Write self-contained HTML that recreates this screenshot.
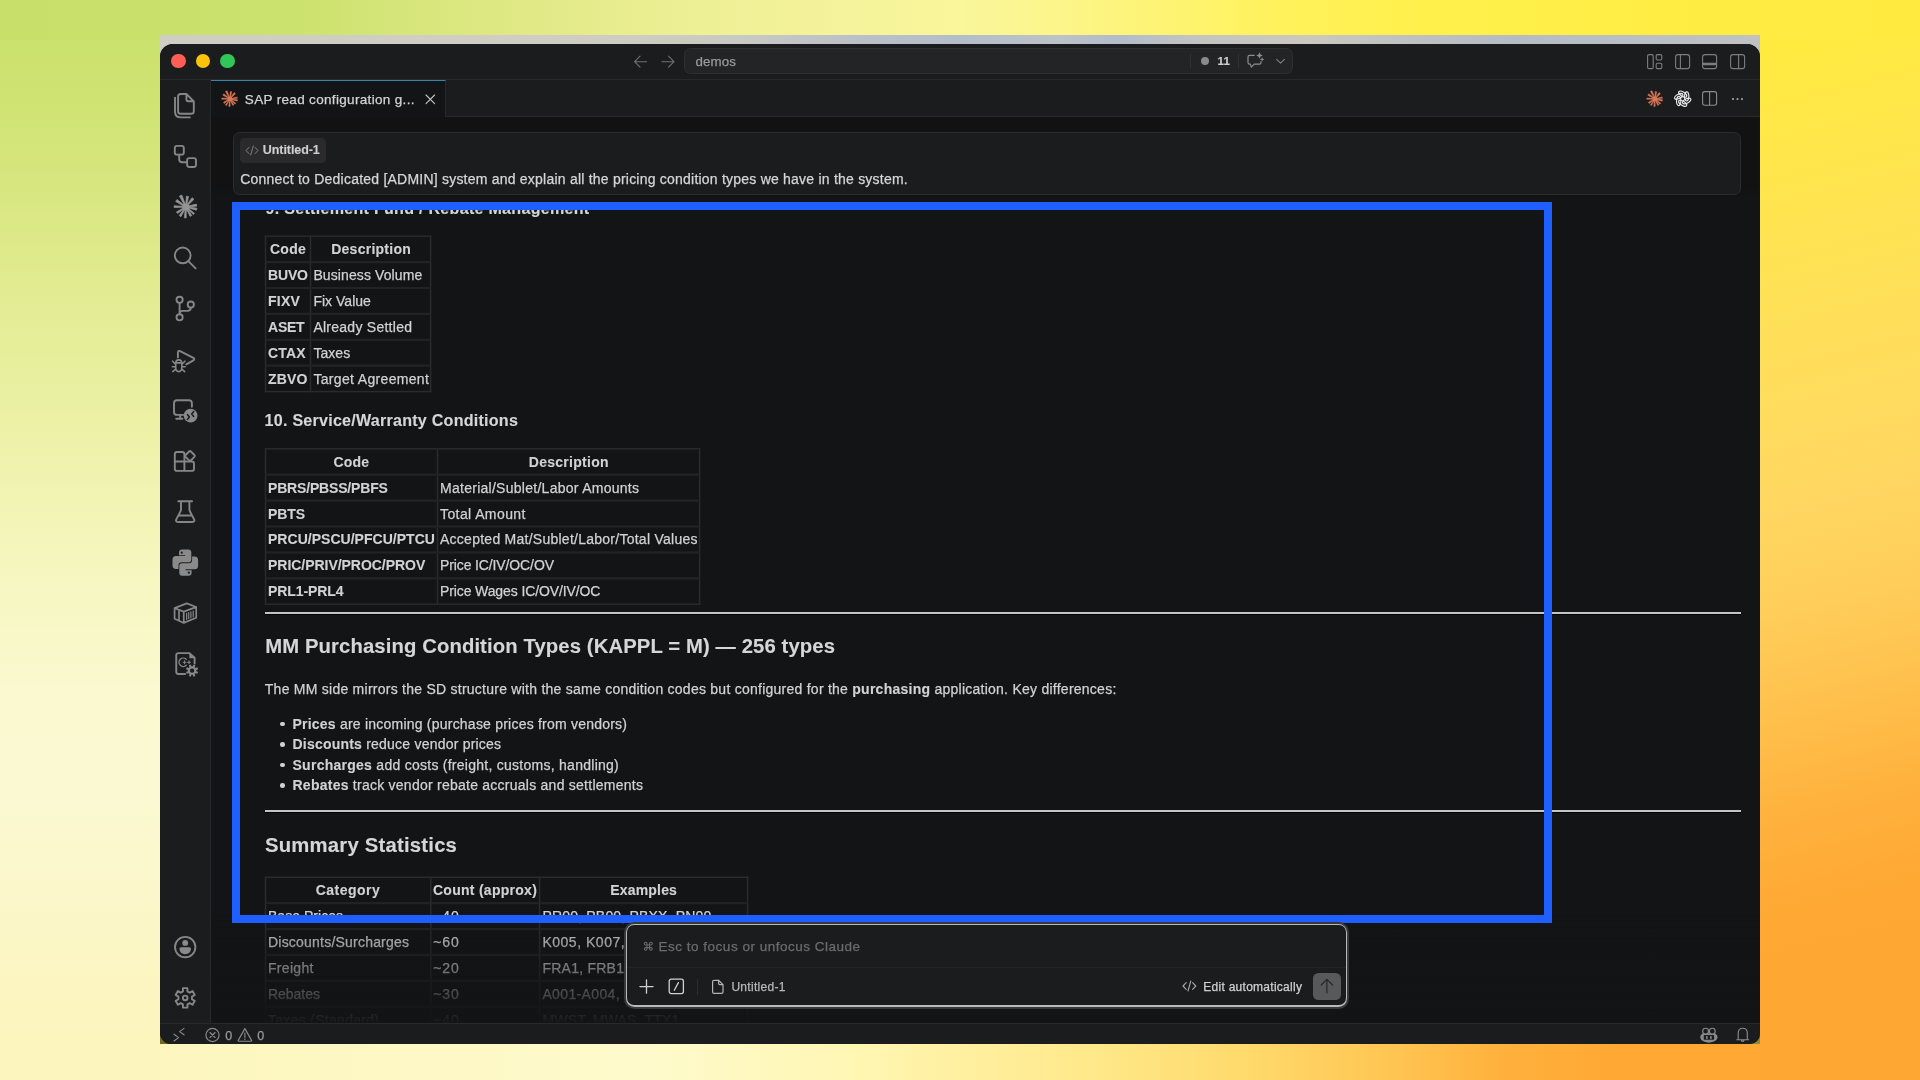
<!DOCTYPE html>
<html lang="en">
<head>
<meta charset="utf-8">
<title>VS Code - Claude</title>
<style>
*{box-sizing:border-box}
html,body{margin:0;padding:0}
body{width:1920px;height:1080px;overflow:hidden;position:relative;font-family:"Liberation Sans",sans-serif;background:#ffe98a}
.abs{position:absolute}
.t{position:absolute;white-space:pre;line-height:1;color:#d2d2d2;-webkit-text-stroke:.25px}
.b,.t b{font-weight:700;-webkit-text-stroke:.12px}
/* background mesh */
#bgB{left:0;top:0;width:1920px;height:1080px;background:linear-gradient(to right,#fcf5bd 0px,#fdf7c2 300px,#fefacb 650px,#fff7b4 850px,#fff0a0 960px,#ffe888 1100px,#ffd96b 1250px,#ffc451 1400px,#ffb13d 1500px,#ffa834 1620px,#ffa733 1920px)}
#bgT{left:0;top:0;width:1920px;height:40px;background:linear-gradient(to right,#c8e06a 0px,#c9e06b 160px,#cce26e 300px,#d8e67c 420px,#e3ea89 560px,#eef096 700px,#f5f39b 850px,#f9f69b 960px,#fcf58a 1060px,#fef370 1180px,#fff25a 1290px,#fff04c 1420px,#ffed44 1660px,#ffea40 1920px)}
#bgL{left:0;top:0;width:161px;height:1080px;background:linear-gradient(to bottom,#c8e06a 0px,#cfe372 100px,#d9e782 200px,#e3ec93 300px,#eaf0a2 400px,#f2f4b4 500px,#f7f7c4 600px,#faf9d0 700px,#fbf9d2 790px,#fbf7ca 900px,#fcf5c0 1000px,#fcf5bd 1080px)}
#bgR{left:1759px;top:0;width:161px;height:1080px;background:linear-gradient(166deg,#ffeb3d 19px,#ffe847 116px,#ffe450 213px,#ffe058 310px,#ffdc5e 407px,#ffd661 504px,#ffcd5a 601px,#ffc04c 698px,#ffb23e 795px,#ffaa36 872px,#ffa733 930px,#ffa733 1090px)}
/* behind-window strip */
#strip{left:160px;top:35px;width:1600.4px;height:30px;background:linear-gradient(to right,#cfcdc4 0px,#d0cec4 350px,#cccbc2 540px,#c6c8c6 600px,#b9c0c8 700px,#b4bdca 800px,#bcc2c8 900px,#b3bccb 960px,#c4c5c2 1040px,#cbc8bf 1150px,#bfc2c2 1240px,#b6bcc6 1350px,#bbc0c6 1500px,#c0c2c2 1600px)}
.olive{width:14px;height:14px;background:#6c6a1e}
/* window */
#win{left:160px;top:44px;width:1600.4px;height:1000.4px;overflow:hidden;border-radius:13px 13px 10.5px 11.5px;background:#131416}
#wini{left:-160px;top:-44px;width:1920px;height:1080px;will-change:transform}
.chrome{background:#1b1c1e}
.line{background:#28292b}
svg{position:absolute;overflow:visible}
.ic{fill:none;stroke:#8b8b8b;stroke-width:1.15;stroke-linecap:round;stroke-linejoin:round}
/* content */
.bd{}
.h2{font-weight:700;color:#d6d6d6;-webkit-text-stroke:.12px}
.h3{font-weight:700;color:#d6d6d6;-webkit-text-stroke:.12px}
.vl{position:absolute;width:1px;background:#2b2c2f}
.rw{fill:#222326}
.hr{position:absolute;left:264.7px;width:1476px;height:2px;background:#c4c4c4;box-shadow:0 1px 0 #000}
</style>
</head>
<body>
<div class="abs" id="bgB"></div>
<div class="abs" id="bgL"></div>
<div class="abs" id="bgR"></div>
<div class="abs" id="bgT"></div>
<div class="abs" id="strip"></div>
<div class="abs olive" style="left:160px;top:1031px;height:13px"></div>
<div class="abs olive" style="left:1748px;top:1033px;width:12px;height:11px;background:#8a8c3c"></div>
<div class="abs" id="win"><div class="abs" id="wini">
<!-- title bar -->
<div class="abs chrome" style="left:160px;top:44px;width:1601px;height:36px"></div>
<div class="abs line" style="left:160px;top:79.4px;width:1601px;height:1px"></div>
<!-- traffic lights -->
<div class="abs" style="left:171.4px;top:53.9px;width:14.6px;height:14.6px;border-radius:50%;background:#ff5e57"></div>
<div class="abs" style="left:195.8px;top:53.9px;width:14.6px;height:14.6px;border-radius:50%;background:#fdc30b"></div>
<div class="abs" style="left:220.2px;top:53.9px;width:14.6px;height:14.6px;border-radius:50%;background:#30c758"></div>
<!-- nav arrows -->
<svg style="left:633px;top:54px" width="16" height="16" viewBox="0 0 16 16"><path class="ic" style="stroke:#6f6f6f" d="M13.6 7.7H1.8M7 2.2L1.6 7.7L7 13.2"/></svg>
<svg style="left:660px;top:54px" width="16" height="16" viewBox="0 0 16 16"><path class="ic" style="stroke:#6f6f6f" d="M2 7.7H13.8M8.6 2.2L14 7.7L8.6 13.2"/></svg>
<!-- command center -->
<div class="abs" style="left:684px;top:48.4px;width:609px;height:25.4px;border-radius:6.5px;background:#232426;border:1px solid #2e2f31"></div>
<div class="t" style="left:695.6px;top:54.6px;font-size:13.3px;letter-spacing:.1px;color:#9a9a9a">demos</div>
<div class="abs" style="left:1190.3px;top:54px;width:1px;height:14px;background:#303133"></div>
<div class="abs" style="left:1238.1px;top:54px;width:1px;height:14px;background:#303133"></div>
<div class="abs" style="left:1200.6px;top:56.7px;width:8.8px;height:8.8px;border-radius:50%;background:#8a8a8a"></div>
<div class="t b" style="left:1217.6px;top:56px;font-size:11.5px;color:#cfcfcf;letter-spacing:.2px">11</div>
<!-- chat sparkle icon -->
<svg style="left:1246px;top:51px" width="20" height="20" viewBox="0 0 20 20"><path class="ic" style="stroke:#8e8e8e;stroke-width:1.2" d="M8.2 4.3H3.6Q2 4.3 2 5.9V11.6Q2 13.2 3.6 13.2H4.4L5.3 16.2L8.3 13.2H13.4Q15 13.2 15 11.6V10.6"/><path fill="#8e8e8e" d="M13.5 1.2L14.5 3.5L16.8 4.5L14.5 5.5L13.5 7.8L12.5 5.5L10.2 4.5L12.5 3.5ZM16.1 6.2L16.8 7.7L18.3 8.4L16.8 9.1L16.1 10.6L15.4 9.1L13.9 8.4L15.4 7.7Z"/></svg>
<svg style="left:1274px;top:55px" width="13" height="13" viewBox="0 0 13 13"><path class="ic" style="stroke:#7c7c7c" d="M2.6 4.3L6.5 8.1L10.4 4.3"/></svg>
<!-- layout icons (top right) -->
<svg style="left:1647px;top:53.5px" width="16" height="16" viewBox="0 0 16 16"><g class="ic" style="stroke:#7d7d7d;stroke-width:1.1"><rect x=".6" y=".6" width="5.6" height="14" rx="1.4"/><rect x="9.2" y=".6" width="5.6" height="5.4" rx="1.2"/><rect x="9.2" y="9.2" width="5.6" height="5.4" rx="1.2"/></g></svg>
<svg style="left:1675px;top:53.5px" width="16" height="16" viewBox="0 0 16 16"><g class="ic" style="stroke:#7d7d7d;stroke-width:1.1"><rect x=".6" y=".6" width="14" height="14" rx="2.4"/><path d="M5.4 .8V14.4"/></g></svg>
<svg style="left:1702.4px;top:53.5px" width="16" height="16" viewBox="0 0 16 16"><g class="ic" style="stroke:#7d7d7d;stroke-width:1.1"><rect x=".6" y=".6" width="14" height="14" rx="2.4"/><path d="M.8 9.4H14.4M.8 10.6H14.4"/></g></svg>
<svg style="left:1730px;top:53.5px" width="16" height="16" viewBox="0 0 16 16"><g class="ic" style="stroke:#7d7d7d;stroke-width:1.1"><rect x=".6" y=".6" width="14" height="14" rx="2.4"/><path d="M8.6 .8V14.4"/></g></svg>

<!-- activity bar -->
<div class="abs chrome" style="left:160px;top:80.4px;width:50.4px;height:944px"></div>
<div class="abs line" style="left:210px;top:80.4px;width:1px;height:944px"></div>
<!-- tab bar -->
<div class="abs chrome" style="left:211px;top:80.4px;width:1550px;height:36px"></div>
<div class="abs line" style="left:211px;top:116px;width:1550px;height:1px"></div>
<!-- active tab -->
<div class="abs" style="left:211px;top:80.4px;width:234.8px;height:37px;background:#131416;border-top:1px solid #3685ad;border-right:1px solid #28292b"></div>
<div class="t" style="left:244.8px;top:92.8px;font-size:13.5px;letter-spacing:.33px;color:#d4d4d4">SAP read configuration g...</div>
<svg style="left:425px;top:93.5px" width="11" height="11" viewBox="0 0 11 11"><path class="ic" style="stroke:#c4c4c4;stroke-width:1.1" d="M1 1L9.6 9.6M9.6 1L1 9.6"/></svg>
<!-- sticky header band -->
<div class="abs" style="left:211px;top:117px;width:1550px;height:81px;background:linear-gradient(to bottom,#121213 0,#121213 70px,#131416 81px)"></div>
<!-- status bar -->
<div class="abs chrome" style="left:160px;top:1023.4px;width:1601px;height:22px"></div>
<div class="abs line" style="left:160px;top:1023.4px;width:1601px;height:1px"></div>
<!-- activity bar icons: drawn in page coordinates -->
<svg style="left:0;top:0" width="1920" height="1080" viewBox="0 0 1920 1080">
<g fill="none" stroke="#868686" stroke-width="1.9" stroke-linecap="round" stroke-linejoin="round">
<!-- explorer -->
<path d="M186.4 94H180.7Q178.1 94 178.1 96.6V111.2Q178.1 113.8 180.7 113.8H191.2Q193.8 113.8 193.8 111.2V101.4L186.4 94V99.2Q186.4 101.2 188.4 101.2H193.6"/>
<path d="M175 97.6V111.4Q175 117.4 181 117.4H189.8"/>
<!-- references -->
<rect x="174.8" y="145.9" width="9" height="8.7" rx="2.2"/>
<rect x="187.1" y="158.1" width="8.9" height="8.9" rx="2.2"/>
<path d="M179.2 154.8V159.3Q179.2 162.3 182.2 162.3H187"/>
<!-- search -->
<circle cx="182.7" cy="255.4" r="7.9"/>
<path d="M188.6 261.3L195.6 268.3"/>
<!-- source control -->
<circle cx="179.6" cy="299.8" r="3.1"/><circle cx="190.8" cy="304.6" r="3.1"/><circle cx="179.6" cy="317.3" r="3.1"/>
<path d="M179.6 303V314.2M190.8 307.8Q190.8 310.9 187.4 310.9H182.6Q179.8 310.9 179.6 313.6"/>
<!-- run and debug -->
<path d="M177.9 357.4V352.6Q177.9 350.2 180.1 351.2L193.4 357.8Q195.2 359.1 193.4 360.4L186.3 364.4"/>
<g stroke-width="1.6"><path d="M175.7 366.2V363.4Q175.7 359.9 178.75 359.9Q181.8 359.9 181.8 363.4V367.6Q181.8 371.6 178.75 371.6Q175.7 371.6 175.7 367.6ZM176 362.9H181.5M172.6 361.2L175.3 364M172.4 366.8H175.4M172.8 371.6L175.6 369.2M184.9 361.2L182.2 364M185.1 366.8H182.1M184.7 371.6L181.9 369.2"/></g>
<!-- remote explorer -->
<path d="M183.2 414.9H177Q174 414.9 174 411.9V403.3Q174 400.3 177 400.3H188.9Q191.9 400.3 191.9 403.3V406.8M180.2 415V418.6M176.2 418.8H182.4"/>
<!-- extensions -->
<path d="M184.4 461.5V454.2Q184.4 452 182.2 452H177Q174.8 452 174.8 454.2V468.7Q174.8 470.9 177 470.9H191.8Q194 470.9 194 468.7V463.7Q194 461.5 191.8 461.5H174.8M184.4 461.5V470.9"/>
<path d="M190 450.6Q190.9 449.7 191.8 450.6L195.3 454.1Q196.2 455 195.3 455.9L191.8 459.4Q190.9 460.3 190 459.4L186.5 455.9Q185.6 455 186.5 454.1Z" transform="translate(-.9 .9)"/>
<!-- testing -->
<path d="M178.3 501.3H192.1M181 501.5V509.3Q181 510.3 180.5 511.3L176.3 519.4Q175.3 522 178 522H192.4Q195.1 522 194.1 519.4L189.9 511.3Q189.4 510.3 189.4 509.3V501.5M179.2 515.5H191.2"/>
<!-- container -->
<g stroke-width="1.7"><path d="M174.6 608.1L186.7 603.4L196.2 607V617.7L183.75 622.9L174.6 618.7ZM174.8 608.2L183.75 611.6L196 607.1M183.75 611.8V622.7M179 610V620.6"/><path stroke-width="1.2" d="M186.6 613.4V619.4M188.7 612.6V618.6M190.9 611.8V617.8M193.2 611V616.8"/></g>
<!-- cmake file -->
<path d="M185.2 674H178.4Q176.25 674 176.25 671.8V655.3Q176.25 653.1 178.4 653.1H189.4L194.6 657.7V663.6"/>
<g stroke-width="1.4"><path d="M186.2 659.3A4.2 4.2 0 1 0 186.2 665.3"/><path stroke-width="1.1" d="M183.2 662.3H186M184.6 660.9V663.7M187.6 662.3H190.4M189 660.9V663.7"/></g>
<!-- account -->
<circle cx="185.2" cy="947.1" r="10.2"/>
<!-- settings -->
<path d="M187.45 991.38L187.45 988.16L182.95 988.16L182.95 991.38L180.67 992.69L177.89 991.08L175.64 994.98L178.43 996.58L178.43 999.22L175.64 1000.82L177.89 1004.72L180.67 1003.11L182.95 1004.42L182.95 1007.64L187.45 1007.64L187.45 1004.42L189.73 1003.11L192.51 1004.72L194.76 1000.82L191.97 999.22L191.97 996.58L194.76 994.98L192.51 991.08L189.73 992.69Z"/>
<circle cx="185.2" cy="997.9" r="2.3"/>
</g>
<g fill="#8a8a8a">
<!-- remote badge -->
<circle cx="190.6" cy="415.7" r="6.9"/>
<!-- cmake fold + gear -->
<path d="M189.4 653.3L194.7 657.9V658.2H189.4Z"/>
<path fill-rule="evenodd" d="M191.46 666.35L190.65 664.57L188.86 665.31L189.54 667.14L188.64 668.04L186.81 667.36L186.07 669.15L187.85 669.96L187.85 671.24L186.07 672.05L186.81 673.84L188.64 673.16L189.54 674.06L188.86 675.89L190.65 676.63L191.46 674.85L192.74 674.85L193.55 676.63L195.34 675.89L194.66 674.06L195.56 673.16L197.39 673.84L198.13 672.05L196.35 671.24L196.35 669.96L198.13 669.15L197.39 667.36L195.56 668.04L194.66 667.14L195.34 665.31L193.55 664.57L192.74 666.35ZM194.3 670.6A2.2 2.2 0 1 0 189.9 670.6A2.2 2.2 0 1 0 194.3 670.6Z"/>
<!-- account head/body -->
<circle cx="185.2" cy="942.9" r="2.95"/>
<path d="M181 947.2H189.4Q191 947.2 191 948.8Q190.6 954.2 185.2 954.2Q179.8 954.2 179.4 948.8Q179.4 947.2 181 947.2Z"/>
<!-- python -->
<g transform="translate(172.5 549.6)"><path fill-rule="evenodd" d="M9.5 0H16Q18.8 0 18.8 3V9.8Q18.8 12.6 16 12.6H9.2Q6 12.6 6 15.8V19.4H3.5Q0 19.4 0 15.6V10Q0 6.5 3.5 6.5H12.6V5.6H6.5V3Q6.5 0 9.5 0ZM10.4 3.1A1.15 1.15 0 1 0 8.1 3.1A1.15 1.15 0 1 0 10.4 3.1Z"/><path fill-rule="evenodd" d="M16.1 26.2H9.6Q6.8 26.2 6.8 23.2V16.4Q6.8 13.6 9.6 13.6H16.4Q19.6 13.6 19.6 10.4V6.8H22.1Q25.6 6.8 25.6 10.6V16.2Q25.6 19.7 22.1 19.7H13V20.6H19.1V23.2Q19.1 26.2 16.1 26.2ZM17.5 23.1A1.15 1.15 0 1 0 15.2 23.1A1.15 1.15 0 1 0 17.5 23.1Z"/></g>
</g>
<!-- remote badge chevrons -->
<path fill="none" stroke="#1b1c1e" stroke-width="1.5" stroke-linecap="round" stroke-linejoin="round" d="M187.4 414.6L189.4 417L187.4 419.4M193.7 411.6L191.7 414L193.7 416.4"/>
</svg>
<!-- claude icons -->
<svg style="left:172.7px;top:194.2px;color:#959595" width="25.8" height="25.8" viewBox="-10 -10 20 20"><path stroke-width=".55" stroke-linejoin="round" stroke="currentColor" fill="currentColor" d="M-0.19 -1.24L-3.19 -9.21L-5.00 -8.37L-0.82 -0.94ZM0.53 -1.13L2.07 -8.05L0.39 -8.30L-0.17 -1.24ZM1.04 -0.69L6.27 -5.85L4.75 -7.14L0.51 -1.14ZM1.24 0.15L8.35 -0.59L8.09 -2.16L1.13 -0.54ZM1.10 0.59L8.20 2.53L8.53 0.97L1.25 -0.10ZM0.67 1.05L5.83 5.91L6.62 5.01L1.13 0.53ZM0.27 1.22L3.21 7.36L4.52 6.63L0.89 0.88ZM-0.42 1.18L-1.25 8.48L0.25 8.57L0.28 1.22ZM-0.94 0.83L-5.15 6.75L-3.88 7.55L-0.35 1.20ZM-1.20 0.36L-7.30 3.88L-6.47 5.13L-0.81 0.95ZM-1.19 -0.38L-9.09 -0.95L-9.13 0.45L-1.21 0.32ZM-0.80 -0.96L-6.89 -5.73L-7.94 -4.15L-1.19 -0.37Z"/><circle cx="0" cy="0" r="2.7" fill="currentColor"/></svg>
<svg style="left:220.9px;top:89.8px;color:#d97757" width="17.8" height="17.8" viewBox="-10 -10 20 20"><path stroke-width=".55" stroke-linejoin="round" stroke="currentColor" fill="currentColor" d="M-0.19 -1.24L-3.19 -9.21L-5.00 -8.37L-0.82 -0.94ZM0.53 -1.13L2.07 -8.05L0.39 -8.30L-0.17 -1.24ZM1.04 -0.69L6.27 -5.85L4.75 -7.14L0.51 -1.14ZM1.24 0.15L8.35 -0.59L8.09 -2.16L1.13 -0.54ZM1.10 0.59L8.20 2.53L8.53 0.97L1.25 -0.10ZM0.67 1.05L5.83 5.91L6.62 5.01L1.13 0.53ZM0.27 1.22L3.21 7.36L4.52 6.63L0.89 0.88ZM-0.42 1.18L-1.25 8.48L0.25 8.57L0.28 1.22ZM-0.94 0.83L-5.15 6.75L-3.88 7.55L-0.35 1.20ZM-1.20 0.36L-7.30 3.88L-6.47 5.13L-0.81 0.95ZM-1.19 -0.38L-9.09 -0.95L-9.13 0.45L-1.21 0.32ZM-0.80 -0.96L-6.89 -5.73L-7.94 -4.15L-1.19 -0.37Z"/><circle cx="0" cy="0" r="2.7" fill="currentColor"/></svg>
<svg style="left:1646px;top:89.8px;color:#d97757" width="17.8" height="17.8" viewBox="-10 -10 20 20"><path stroke-width=".55" stroke-linejoin="round" stroke="currentColor" fill="currentColor" d="M-0.19 -1.24L-3.19 -9.21L-5.00 -8.37L-0.82 -0.94ZM0.53 -1.13L2.07 -8.05L0.39 -8.30L-0.17 -1.24ZM1.04 -0.69L6.27 -5.85L4.75 -7.14L0.51 -1.14ZM1.24 0.15L8.35 -0.59L8.09 -2.16L1.13 -0.54ZM1.10 0.59L8.20 2.53L8.53 0.97L1.25 -0.10ZM0.67 1.05L5.83 5.91L6.62 5.01L1.13 0.53ZM0.27 1.22L3.21 7.36L4.52 6.63L0.89 0.88ZM-0.42 1.18L-1.25 8.48L0.25 8.57L0.28 1.22ZM-0.94 0.83L-5.15 6.75L-3.88 7.55L-0.35 1.20ZM-1.20 0.36L-7.30 3.88L-6.47 5.13L-0.81 0.95ZM-1.19 -0.38L-9.09 -0.95L-9.13 0.45L-1.21 0.32ZM-0.80 -0.96L-6.89 -5.73L-7.94 -4.15L-1.19 -0.37Z"/><circle cx="0" cy="0" r="2.7" fill="currentColor"/></svg>
<!-- user message -->
<div class="abs" style="left:233.4px;top:132px;width:1507.4px;height:62.6px;border:1px solid #2b2c2f;border-radius:6.5px;background:#1b1c1e"></div>
<div class="abs" style="left:240.4px;top:137.5px;width:86px;height:25px;border-radius:4.5px;background:#2a2a2d"></div>
<svg style="left:245px;top:144.5px" width="14" height="11" viewBox="0 0 14 11"><path class="ic" style="stroke:#808080;stroke-width:1" d="M4 2.4L1 5.5L4 8.6M10 2.4L13 5.5L10 8.6M8.3 1L5.7 10"/></svg>
<div class="t b" style="top:143.62px;font-size:12.5px;letter-spacing:-0.071px;left:262.80px;color:#cfcfcf;">Untitled-1</div>
<div class="t" style="top:171.75px;font-size:14px;letter-spacing:0.222px;left:240.20px;color:#d6d6d6;">Connect to Dedicated [ADMIN] system and explain all the pricing condition types we have in the system.</div>
<!-- chat scroller -->
<div class="abs" style="left:211px;top:200.4px;width:1550px;height:823px;overflow:hidden"><div class="abs" style="left:-211px;top:-200.4px;width:1920px;height:1080px">
<div class="t h3" style="top:199.87px;font-size:16.1px;letter-spacing:0.262px;left:265.60px;">9. Settlement Fund / Rebate Management</div>
<div class="t h3" style="top:412.37px;font-size:16.1px;letter-spacing:0.235px;left:264.60px;">10. Service/Warranty Conditions</div>
<div class="t h2" style="top:636.32px;font-size:20.3px;letter-spacing:0.104px;left:265.20px;">MM Purchasing Condition Types (KAPPL = M) — 256 types</div>
<div class="t h2" style="top:834.52px;font-size:20.3px;letter-spacing:0.215px;left:265.00px;">Summary Statistics</div>
<div class="t" style="top:682.25px;font-size:14px;letter-spacing:0.251px;left:264.80px;">The MM side mirrors the SD structure with the same condition codes but configured for the <b>purchasing</b> application. Key differences:</div>
<div class="abs" style="left:279.95px;top:721.80px;width:4.6px;height:4.6px;border-radius:50%;background:#d2d2d2"></div>
<div class="t" style="top:716.85px;font-size:14px;letter-spacing:0.220px;left:292.50px;"><b>Prices</b> are incoming (purchase prices from vendors)</div>
<div class="abs" style="left:279.95px;top:742.30px;width:4.6px;height:4.6px;border-radius:50%;background:#d2d2d2"></div>
<div class="t" style="top:737.35px;font-size:14px;letter-spacing:0.216px;left:292.50px;"><b>Discounts</b> reduce vendor prices</div>
<div class="abs" style="left:279.95px;top:762.80px;width:4.6px;height:4.6px;border-radius:50%;background:#d2d2d2"></div>
<div class="t" style="top:757.85px;font-size:14px;letter-spacing:0.264px;left:292.50px;"><b>Surcharges</b> add costs (freight, customs, handling)</div>
<div class="abs" style="left:279.95px;top:783.30px;width:4.6px;height:4.6px;border-radius:50%;background:#d2d2d2"></div>
<div class="t" style="top:778.35px;font-size:14px;letter-spacing:0.248px;left:292.50px;"><b>Rebates</b> track vendor rebate accruals and settlements</div>
<div class="hr" style="top:611.6px"></div>
<div class="hr" style="top:809.7px"></div>
<div class="t b" style="top:242.15px;font-size:14px;letter-spacing:0.300px;left:88.05px;width:400px;text-align:center;">Code</div>
<div class="t b" style="top:242.15px;font-size:14px;letter-spacing:0.258px;left:171.13px;width:400px;text-align:center;">Description</div>
<div class="t b" style="top:268.05px;font-size:14px;letter-spacing:-0.218px;left:268.10px;">BUVO</div>
<div class="t" style="top:268.05px;font-size:14px;letter-spacing:0.107px;left:313.40px;">Business Volume</div>
<div class="t b" style="top:293.95px;font-size:14px;letter-spacing:0.192px;left:268.10px;">FIXV</div>
<div class="t" style="top:293.95px;font-size:14px;letter-spacing:0.021px;left:313.40px;">Fix Value</div>
<div class="t b" style="top:319.85px;font-size:14px;letter-spacing:-0.315px;left:268.10px;">ASET</div>
<div class="t" style="top:319.85px;font-size:14px;letter-spacing:0.260px;left:313.40px;">Already Settled</div>
<div class="t b" style="top:345.75px;font-size:14px;letter-spacing:0.141px;left:268.10px;">CTAX</div>
<div class="t" style="top:345.75px;font-size:14px;letter-spacing:0.055px;left:313.40px;">Taxes</div>
<div class="t b" style="top:371.65px;font-size:14px;letter-spacing:0.103px;left:268.10px;">ZBVO</div>
<div class="t" style="top:371.65px;font-size:14px;letter-spacing:0.332px;left:313.40px;">Target Agreement</div>
<div class="t b" style="top:454.75px;font-size:14px;letter-spacing:0.200px;left:151.30px;width:400px;text-align:center;">Code</div>
<div class="t b" style="top:454.75px;font-size:14px;letter-spacing:0.278px;left:368.84px;width:400px;text-align:center;">Description</div>
<div class="t b" style="top:480.65px;font-size:14px;letter-spacing:-0.172px;left:268.00px;">PBRS/PBSS/PBFS</div>
<div class="t" style="top:480.65px;font-size:14px;letter-spacing:0.270px;left:440.00px;">Material/Sublet/Labor Amounts</div>
<div class="t b" style="top:506.55px;font-size:14px;letter-spacing:-0.115px;left:268.00px;">PBTS</div>
<div class="t" style="top:506.55px;font-size:14px;letter-spacing:0.406px;left:440.00px;">Total Amount</div>
<div class="t b" style="top:532.45px;font-size:14px;letter-spacing:0.024px;left:268.00px;">PRCU/PSCU/PFCU/PTCU</div>
<div class="t" style="top:532.45px;font-size:14px;letter-spacing:0.256px;left:440.00px;">Accepted Mat/Sublet/Labor/Total Values</div>
<div class="t b" style="top:558.35px;font-size:14px;letter-spacing:-0.035px;left:268.00px;">PRIC/PRIV/PROC/PROV</div>
<div class="t" style="top:558.35px;font-size:14px;letter-spacing:-0.120px;left:440.00px;">Price IC/IV/OC/OV</div>
<div class="t b" style="top:584.25px;font-size:14px;letter-spacing:-0.092px;left:268.00px;">PRL1-PRL4</div>
<div class="t" style="top:584.25px;font-size:14px;letter-spacing:-0.112px;left:440.00px;">Price Wages IC/OV/IV/OC</div>
<div class="t b" style="top:883.35px;font-size:14px;letter-spacing:0.487px;left:147.94px;width:400px;text-align:center;">Category</div>
<div class="t b" style="top:883.35px;font-size:14px;letter-spacing:0.275px;left:285.04px;width:400px;text-align:center;">Count (approx)</div>
<div class="t b" style="top:883.35px;font-size:14px;letter-spacing:0.175px;left:443.69px;width:400px;text-align:center;">Examples</div>
<div class="t" style="top:909.25px;font-size:14px;letter-spacing:0.030px;left:268.00px;">Base Prices</div>
<div class="t" style="top:909.25px;font-size:14px;letter-spacing:0.900px;left:433.20px;">~40</div>
<div class="t" style="top:909.25px;font-size:14px;letter-spacing:0.191px;left:542.40px;">PR00, PB00, PBXX, PN00</div>
<div class="t" style="top:935.15px;font-size:14px;letter-spacing:0.213px;left:268.00px;">Discounts/Surcharges</div>
<div class="t" style="top:935.15px;font-size:14px;letter-spacing:0.900px;left:433.20px;">~60</div>
<div class="t" style="top:935.15px;font-size:14px;letter-spacing:0.518px;left:542.40px;">K005, K007, K020, K029</div>
<div class="t" style="top:961.05px;font-size:14px;letter-spacing:0.304px;left:268.00px;">Freight</div>
<div class="t" style="top:961.05px;font-size:14px;letter-spacing:0.900px;left:433.20px;">~20</div>
<div class="t" style="top:961.05px;font-size:14px;letter-spacing:0.246px;left:542.40px;">FRA1, FRB1, VF00, KF00</div>
<div class="t" style="top:986.95px;font-size:14px;letter-spacing:-0.026px;left:268.00px;">Rebates</div>
<div class="t" style="top:986.95px;font-size:14px;letter-spacing:0.900px;left:433.20px;">~30</div>
<div class="t" style="top:986.95px;font-size:14px;letter-spacing:0.363px;left:542.40px;">A001-A004, BO01-BO06</div>
<div class="t" style="top:1012.85px;font-size:14px;letter-spacing:0.293px;left:268.00px;">Taxes (Standard)</div>
<div class="t" style="top:1012.85px;font-size:14px;letter-spacing:0.900px;left:433.20px;">~40</div>
<div class="t" style="top:1012.85px;font-size:14px;letter-spacing:0.215px;left:542.40px;">MWST, MWAS, TTX1</div>
<svg style="left:0;top:0" width="1920" height="1080" viewBox="0 0 1920 1080"><g fill="#2a2b2e"><rect x="264.75" y="235.45" width="1.5" height="156.90"/><rect x="309.75" y="235.45" width="1.5" height="156.90"/><rect x="429.85" y="235.45" width="1.5" height="156.90"/><rect x="264.75" y="235.45" width="166.60" height="1.5"/><rect class="rw" x="265.50" y="261.00" width="165.10" height="2.2"/><rect class="rw" x="265.50" y="286.90" width="165.10" height="2.2"/><rect class="rw" x="265.50" y="312.80" width="165.10" height="2.2"/><rect class="rw" x="265.50" y="338.70" width="165.10" height="2.2"/><rect class="rw" x="265.50" y="364.60" width="165.10" height="2.2"/><rect x="264.75" y="390.85" width="166.60" height="1.5"/><rect x="264.75" y="448.05" width="1.5" height="156.90"/><rect x="436.75" y="448.05" width="1.5" height="156.90"/><rect x="698.85" y="448.05" width="1.5" height="156.90"/><rect x="264.75" y="448.05" width="435.60" height="1.5"/><rect class="rw" x="265.50" y="473.60" width="434.10" height="2.2"/><rect class="rw" x="265.50" y="499.50" width="434.10" height="2.2"/><rect class="rw" x="265.50" y="525.40" width="434.10" height="2.2"/><rect class="rw" x="265.50" y="551.30" width="434.10" height="2.2"/><rect class="rw" x="265.50" y="577.20" width="434.10" height="2.2"/><rect x="264.75" y="603.45" width="435.60" height="1.5"/><rect x="264.75" y="876.55" width="1.5" height="156.90"/><rect x="430.05" y="876.55" width="1.5" height="156.90"/><rect x="538.85" y="876.55" width="1.5" height="156.90"/><rect x="746.85" y="876.55" width="1.5" height="156.90"/><rect x="264.75" y="876.55" width="483.60" height="1.5"/><rect class="rw" x="265.50" y="902.10" width="482.10" height="2.2"/><rect class="rw" x="265.50" y="928.00" width="482.10" height="2.2"/><rect class="rw" x="265.50" y="953.90" width="482.10" height="2.2"/><rect class="rw" x="265.50" y="979.80" width="482.10" height="2.2"/><rect class="rw" x="265.50" y="1005.70" width="482.10" height="2.2"/><rect x="264.75" y="1031.95" width="483.60" height="1.5"/></g></svg>
<div class="abs" style="left:211px;top:915px;width:1550px;height:110px;background:linear-gradient(to bottom,rgba(19,20,22,0),rgba(19,20,22,1))"></div>
<div class="abs" style="left:232.3px;top:201.6px;width:1319.9px;height:721.3px;border:8px solid #1f5fff"></div>
</div></div>
<!-- tab bar right icons -->
<svg style="left:1673.9px;top:89.7px" width="17.4" height="17.4" viewBox="-9 -9 18 18"><g fill="none" stroke="#e8e8e8" stroke-width="1.2"><ellipse rx="4.75" ry="2.25" transform="rotate(0) translate(0 -4.75) rotate(33)"/><ellipse rx="4.75" ry="2.25" transform="rotate(60) translate(0 -4.75) rotate(33)"/><ellipse rx="4.75" ry="2.25" transform="rotate(120) translate(0 -4.75) rotate(33)"/><ellipse rx="4.75" ry="2.25" transform="rotate(180) translate(0 -4.75) rotate(33)"/><ellipse rx="4.75" ry="2.25" transform="rotate(240) translate(0 -4.75) rotate(33)"/><ellipse rx="4.75" ry="2.25" transform="rotate(300) translate(0 -4.75) rotate(33)"/></g></svg>
<svg style="left:1702.4px;top:91.2px" width="16" height="16" viewBox="0 0 16 16"><g class="ic" style="stroke:#8a8a8a;stroke-width:1.1"><rect x=".6" y=".6" width="14" height="13.6" rx="2.2"/><path d="M7.6 .8V14"/></g></svg>
<div class="abs" style="left:1732.3px;top:98px;width:1.7px;height:1.7px;border-radius:50%;background:#9a9a9a;box-shadow:4.5px 0 0 #9a9a9a,9px 0 0 #9a9a9a"></div>

<!-- chat input box -->
<div class="abs" style="left:623.7px;top:921.9px;width:725.8px;height:86.8px;border-radius:10.5px;background:#38393b"></div>
<div class="abs" style="left:625.7px;top:923.9px;width:721.8px;height:82.8px;border-radius:8.5px;background:#b9b9b9"></div>
<div class="abs" style="left:627.2px;top:925.4px;width:718.8px;height:79.8px;border-radius:7px;background:#1b1c1e"></div>
<div class="abs" style="left:627.2px;top:966.6px;width:718.8px;height:1px;background:#232426"></div>
<svg style="left:643.4px;top:941.4px" width="10.6" height="10.6" viewBox="0 0 24 24"><path fill="none" stroke="#6c6c6c" stroke-width="2.3" d="M18 3a3 3 0 0 0-3 3v12a3 3 0 0 0 3 3 3 3 0 0 0 3-3 3 3 0 0 0-3-3H6a3 3 0 0 0-3 3 3 3 0 0 0 3 3 3 3 0 0 0 3-3V6a3 3 0 0 0-3-3 3 3 0 0 0-3 3 3 3 0 0 0 3 3h12a3 3 0 0 0 3-3 3 3 0 0 0-3-3z"/></svg>
<div class="t" style="left:658.6px;top:940.2px;font-size:13.5px;letter-spacing:.5px;color:#6c6c6c">Esc to focus or unfocus Claude</div>
<!-- plus -->
<svg style="left:639px;top:979px" width="16" height="16" viewBox="0 0 16 16"><path class="ic" style="stroke:#d0d0d0;stroke-width:1.3" d="M7.5 1V14.2M.9 7.6H14.1"/></svg>
<!-- slash box -->
<svg style="left:668px;top:978px" width="17" height="17" viewBox="0 0 17 17"><g class="ic" style="stroke:#d0d0d0;stroke-width:1.3"><rect x="1.2" y="1.2" width="14.2" height="14.4" rx="2"/><path d="M10.4 4.6L6.3 12.2"/></g></svg>
<div class="abs" style="left:696.7px;top:978.6px;width:1px;height:16.4px;background:#2c2d2f"></div>
<!-- file icon -->
<svg style="left:711px;top:978.6px" width="14" height="16" viewBox="0 0 14 16"><path class="ic" style="stroke:#b4b4b4;stroke-width:1.2" d="M7.6 1.3H3Q1.6 1.3 1.6 2.7V12.9Q1.6 14.3 3 14.3H10.6Q12 14.3 12 12.9V5.6L7.6 1.3V4.4Q7.6 5.6 8.8 5.6H11.8"/></svg>
<div class="t" style="left:731.4px;top:980.6px;font-size:12px;letter-spacing:.3px;color:#b8b8b8">Untitled-1</div>
<!-- edit automatically -->
<svg style="left:1182.4px;top:980.4px" width="15" height="12" viewBox="0 0 15 12"><path class="ic" style="stroke:#a8a8a8;stroke-width:1.1" d="M4.2 2.6L1 6L4.2 9.4M10.6 2.6L13.8 6L10.6 9.4M8.8 1L6 11"/></svg>
<div class="t" style="left:1203.3px;top:980.6px;font-size:12px;letter-spacing:.27px;color:#d0d0d0">Edit automatically</div>
<div class="abs" style="left:1313.2px;top:972.8px;width:27.4px;height:27.2px;border-radius:5.5px;background:#58595b"></div>
<svg style="left:1319px;top:978px" width="16" height="17" viewBox="0 0 16 17"><path class="ic" style="stroke:#27282a;stroke-width:1.2" d="M7.9 1.4V15M2.2 7L7.9 1.3L13.6 7"/></svg>
<!-- status bar items -->
<svg style="left:0;top:0" width="1920" height="1080" viewBox="0 0 1920 1080"><g fill="none" stroke="#8a8a8a" stroke-width="1.15" stroke-linecap="round" stroke-linejoin="round">
<path d="M174 1034.2L178.6 1037.6L174 1041M184 1028.4L179.6 1031.6L184 1034.8"/>
<circle cx="212.5" cy="1035" r="6.6"/><path d="M210 1032.5L215 1037.5M215 1032.5L210 1037.5"/>
<path d="M244.9 1028.6L238.2 1040.4Q237.9 1041.2 238.8 1041.2H251Q251.9 1041.2 251.6 1040.4ZM244.9 1033V1037.4"/>
<!-- copilot -->
<path fill="#8a8a8a" stroke="none" d="M1702.8 1033.2Q1700 1034.8 1700.2 1037.6Q1700.6 1040.2 1703.8 1041.6Q1708.9 1043.9 1714 1041.6Q1717.2 1040.2 1717.6 1037.6Q1717.8 1034.8 1715 1033.2Z"/>
<rect x="1703.7" y="1035.1" width="10.4" height="4.7" rx="1" fill="#1b1c1e" stroke="none"/>
<path stroke-width="1.5" d="M1706.9 1036.5V1038.6M1710.9 1036.5V1038.6"/>
<circle cx="1705.6" cy="1031.2" r="2.9" fill="#1b1c1e"/><circle cx="1712.3" cy="1031.2" r="2.9" fill="#1b1c1e"/>
<!-- bell -->
<path d="M1738.2 1039.5V1033.2Q1738.2 1028.2 1742.7 1028.2Q1747.3 1028.2 1747.3 1033.2V1039.5L1748.6 1039.7H1736.8L1738.2 1039.5M1741.4 1040.4Q1742.7 1042.6 1744 1040.4"/>
</g><circle cx="244.9" cy="1039.3" r=".75" fill="#8a8a8a"/></svg>
<div class="t" style="left:225.2px;top:1029.6px;font-size:12.5px;color:#9a9a9a">0</div>
<div class="t" style="left:257.3px;top:1029.6px;font-size:12.5px;color:#9a9a9a">0</div>
</div></div>
</body>
</html>
